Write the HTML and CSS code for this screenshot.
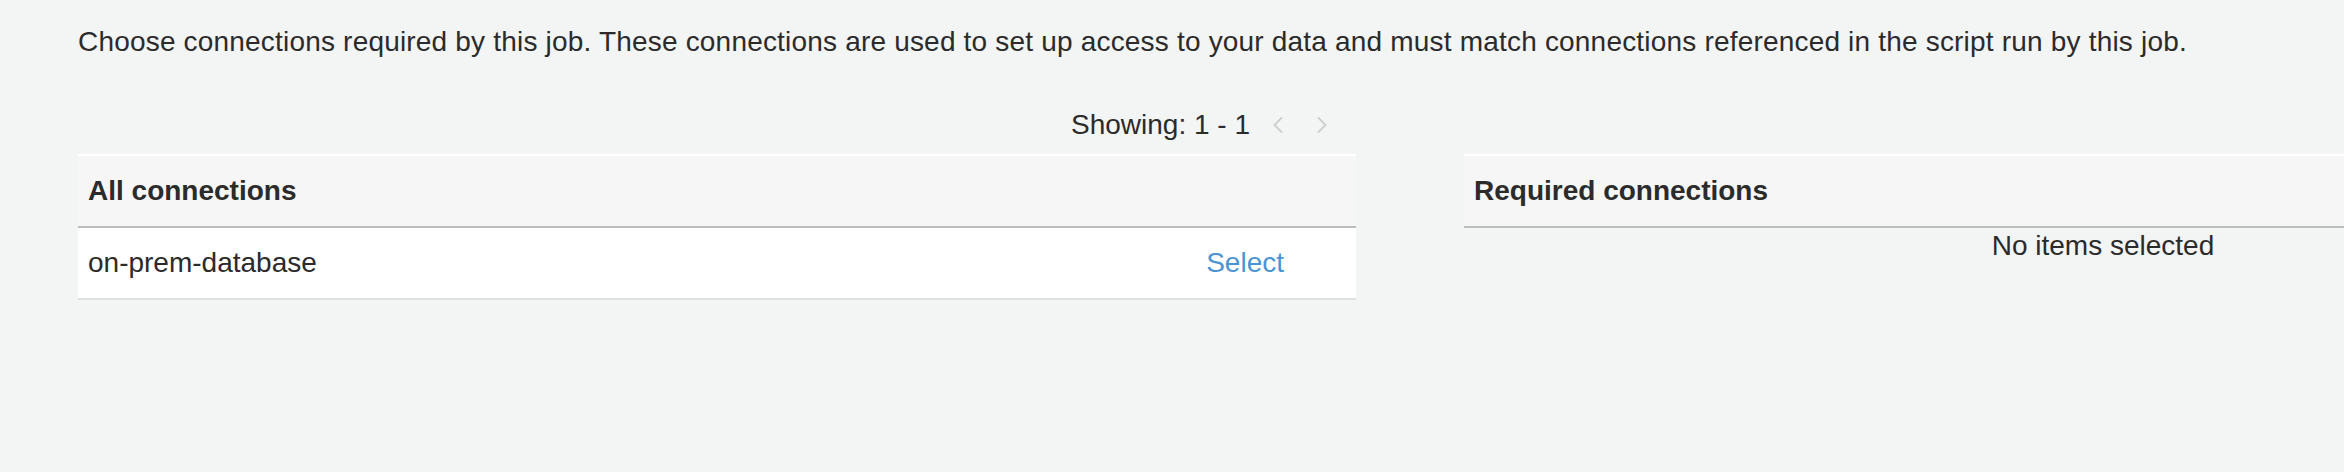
FILE: index.html
```html
<!DOCTYPE html>
<html>
<head>
<meta charset="utf-8">
<link rel="stylesheet" href="styles.css">
</head>
<body>
<div class="page">
  <p class="intro">Choose connections required by this job. These connections are used to set up access to your data and must match connections referenced in the script run by this job.</p>
  <div class="columns">
    <div class="pager">
      <span class="pager-text">Showing: 1 - 1</span>
      <svg class="chev" width="12" height="18" viewBox="0 0 12 18"><path d="M10 1.5 L2.5 9 L10 16.5" fill="none" stroke="#cfcfcf" stroke-width="2"/></svg>
      <svg class="chev" width="12" height="18" viewBox="0 0 12 18"><path d="M2 1.5 L9.5 9 L2 16.5" fill="none" stroke="#cfcfcf" stroke-width="2"/></svg>
    </div>
    <div class="spacer"></div>
    <div class="table">
      <div class="thead">All connections</div>
      <div class="trow">
        <span class="cell-name">on-prem-database</span>
        <a class="link">Select</a>
      </div>
    </div>
    <div class="table">
      <div class="thead">Required connections</div>
      <div class="empty">No items selected</div>
    </div>
  </div>
</div>
</body>
</html>
```

FILE: styles.css
```css
html, body {
  margin: 0;
  padding: 0;
  background: #f3f4f4;
  overflow: hidden;
}
body {
  width: 2344px;
  height: 472px;
  font-family: "Liberation Sans", Arial, sans-serif;
  font-size: 28px;
  line-height: 32px;
  color: #2b2b2b;
}
.page {
  padding: 26px 0 0 78px;
  overflow: hidden;
}
.intro {
  margin: 0;
  white-space: nowrap;
  letter-spacing: 0.19px;
}
.columns {
  display: grid;
  grid-template-columns: 1278px 1278px;
  column-gap: 108px;
  margin-top: 51px;
}
.pager {
  display: flex;
  justify-content: flex-end;
  align-items: center;
  padding-right: 28px;
  height: 45px;
  align-self: start;
}
.pager-text {
  margin-right: 22px;
  line-height: 32px;
  margin-top: -13px;
}
.chev {
  margin-top: -13px;
}
.chev + .chev {
  margin-left: 32px;
}
.table {
  display: flex;
  flex-direction: column;
}
.thead {
  height: 74px;
  box-sizing: border-box;
  border-top: 2px solid #ffffff;
  border-bottom: 2px solid #bdbdbd;
  background: #f6f6f6;
  display: flex;
  align-items: center;
  padding: 0 10px;
  font-weight: bold;
}
.trow {
  height: 72px;
  box-sizing: border-box;
  background: #ffffff;
  border-bottom: 2px solid #e0e0e0;
  display: flex;
  align-items: center;
  justify-content: space-between;
  padding: 0 72px 0 10px;
}
.link {
  color: #4a94d1;
  cursor: pointer;
}
.empty {
  text-align: center;
  padding-top: 2px;
}
```
